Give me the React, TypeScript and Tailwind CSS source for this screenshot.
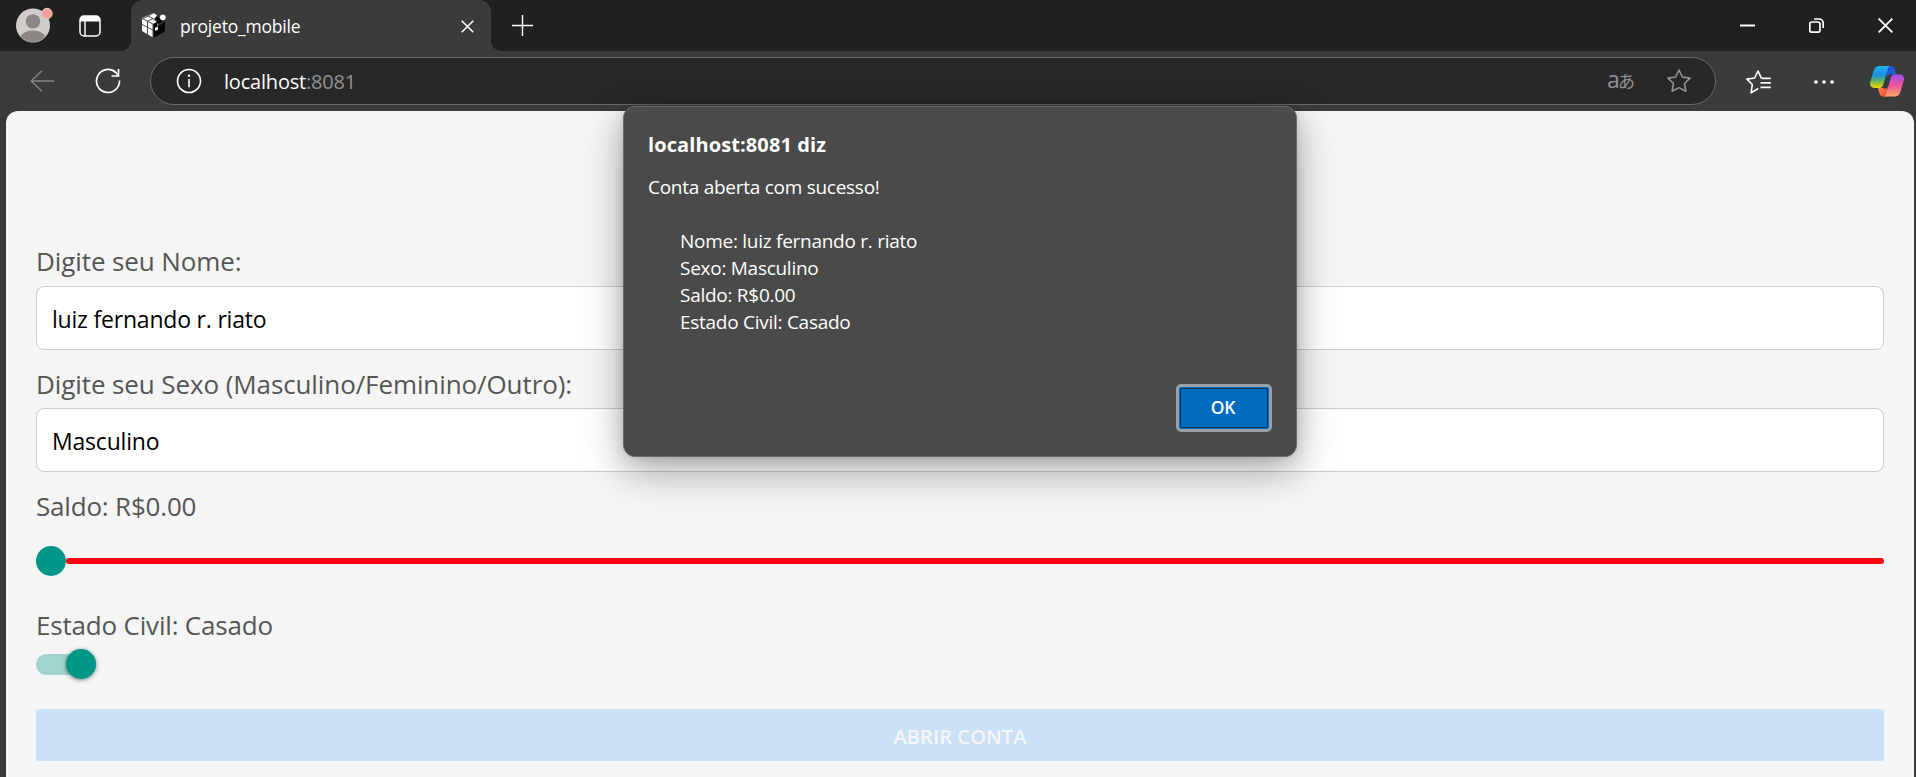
import React from "react";

function TabStrip() {
  return (
    <div className="flex h-[51px] bg-[#3b3b3b]">
      <div className="flex w-[131px] items-center rounded-br-[10px] bg-[#202020] pl-[16px]">
        <svg width="38" height="36" viewBox="0 0 38 36" className="-mt-px">
          <defs>
            <clipPath id="avatar">
              <circle cx="17" cy="18.5" r="16.5" />
            </clipPath>
          </defs>
          <circle cx="17" cy="18.5" r="17" fill="#d0cdc9" />
          <g clipPath="url(#avatar)" fill="#8a8785">
            <circle cx="17" cy="14.4" r="7.2" />
            <ellipse cx="17" cy="31.5" rx="12.5" ry="8" />
          </g>
          <circle cx="31" cy="6.5" r="5.2" fill="#fb9d98" stroke="#d8d0cd" strokeWidth="1" />
        </svg>
        <svg width="22" height="22" viewBox="0 0 22 22" fill="none" className="ml-[25px]">
          <rect x="1" y="1" width="20" height="20" rx="4" stroke="#fff" strokeWidth="1.5" />
          <path d="M1 6.5V5a4 4 0 0 1 4-4h12a4 4 0 0 1 4 4v1.5z" fill="#fff" />
          <path d="M6 6v15" stroke="#fff" strokeWidth="1.4" />
        </svg>
      </div>
      <div className="w-[360px] bg-[#202020]">
        <div className="flex h-full items-center rounded-t-[12px] bg-[#3b3b3b] pl-[11px]">
          <svg width="24" height="25" viewBox="0 0 24 25">
            <path d="M0 5 11 0l4 2-3 4.500L16 9v5l-4 9.500-1 1L0 18z" fill="#fff" />
            <path d="M11 11l4.500-2.500V13l4.500-2 3-3.500v11L11 25z" fill="#050505" />
            <path d="m15 3.500 4 2.500 1 3-4 2-2-3-2-1z" fill="#050505" />
            <path d="M0 5.500 11 11v14M5.500 2.700 15 7.500M5.500 8v14M11 .5 1 5.500M0 11.500l11 5.500M11 5.500 5.500 8.200" stroke="#4a4a4a" strokeWidth="1" fill="none" />
            <circle cx="20.800" cy="4.300" r="2.900" fill="#fff" />
            <path d="m13 15 3-1.500v3L13 18z" fill="#fff" />
          </svg>
          <span className="ml-[14px] w-[281px] text-[17.5px] leading-[26px] tracking-[-0.2px] text-white">projeto_mobile</span>
          <svg width="13" height="13" viewBox="0 0 13 13" className="mt-px shrink-0">
            <path d="m.7.7 11.6 11.6M12.3.7.7 12.3" stroke="#fff" strokeWidth="1.5" />
          </svg>
        </div>
      </div>
      <div className="flex flex-1 items-center rounded-bl-[10px] bg-[#202020] pl-[21px] pr-[23px]">
        <svg width="21" height="21" viewBox="0 0 21 21" className="-mt-px">
          <path d="M10.5 0v21M0 10.5h21" stroke="#fff" strokeWidth="1.4" />
        </svg>
        <div className="ml-auto flex items-center">
          <svg width="15" height="15" viewBox="0 0 15 15" className="-mt-px mr-[54px]">
            <path d="M0 7.5h15" stroke="#fff" strokeWidth="2" />
          </svg>
          <svg width="15" height="15" viewBox="0 0 15 15" fill="none" className="mr-[54px]">
            <rect x=".8" y="4" width="10.2" height="10.2" rx="2" stroke="#fff" strokeWidth="1.7" />
            <path d="M5 1h5a4.2 4.2 0 0 1 4.2 4.2V10" stroke="#fff" strokeWidth="1.7" />
          </svg>
          <svg width="15" height="15" viewBox="0 0 15 15">
            <path d="m.6.6 13.8 13.8M14.4.6.6 14.4" stroke="#fff" strokeWidth="1.8" />
          </svg>
        </div>
      </div>
    </div>
  );
}

function CopilotIcon() {
  return (
    <svg width="34" height="31" viewBox="0 0 34 31">
      <defs>
        <linearGradient id="cpA" x1="0" y1="0" x2="0" y2="1">
          <stop offset="0" stopColor="#20b5e8" />
          <stop offset=".4" stopColor="#168ee5" />
          <stop offset=".68" stopColor="#63b75c" />
          <stop offset="1" stopColor="#f5d400" />
        </linearGradient>
        <linearGradient id="cpB" x1="0" y1="0" x2="0" y2="1">
          <stop offset="0" stopColor="#a64df0" />
          <stop offset=".5" stopColor="#ed5597" />
          <stop offset="1" stopColor="#ffa766" />
        </linearGradient>
        <linearGradient id="cpC" x1="0" y1="0" x2="1" y2="1">
          <stop offset="0" stopColor="#1d4cd0" />
          <stop offset="1" stopColor="#1b70eb" />
        </linearGradient>
        <linearGradient id="cpD" x1="0" y1="0" x2="1" y2="1">
          <stop offset="0" stopColor="#ff9a3c" />
          <stop offset="1" stopColor="#ef3c3c" />
        </linearGradient>
      </defs>
      <path d="M16 0h5c2.200 0 3 1.500 3.600 3.500L26 8.500h-4.500c-2.500 0-4 1.200-4.600 3.500z" fill="url(#cpC)" />
      <path d="M18 30.500h-5c-2.200 0-3-1.500-3.600-3.500L8 22h4.500c2.500 0 4-1.200 4.600-3.500z" fill="url(#cpD)" />
      <path d="M9.500 0H21c-2 0-2.800 1.500-3.500 4l-4 14c-.7 2.600-2 4-4.500 4H4.500C1 22-.6 19.500.2 16L3.500 5C4.500 1.700 6.500 0 9.500 0z" fill="url(#cpA)" />
      <path d="M24.500 30.500H13c2 0 2.800-1.500 3.500-4l4-14c.7-2.600 2-4 4.500-4h4.500c3.500 0 5.100 2.500 4.300 6l-3.300 11c-1 3.300-3 5-6 5z" fill="url(#cpB)" />
      <path d="M17.200 10.500c.5-1.300 1.600-2 3-2H22c-.8.800-1.300 2.200-1.600 3.500l-2.900 9.500c-.3.700-.9 1-1.600 1h-2.700c.5-1 .9-2 1.200-3z" fill="#3b3b3b" />
    </svg>
  );
}

function Toolbar() {
  return (
    <div className="flex h-[60px] items-center bg-[#3b3b3b] pl-[30px]">
      <svg width="24" height="22" viewBox="0 0 24 22" fill="none" stroke="#848484" strokeWidth="1.5" className="-mt-px">
        <path d="M12 .8 1 11l11 10.200M1 11h23" />
      </svg>
      <svg width="26" height="26" viewBox="0 0 26 26" fill="none" stroke="#fff" strokeWidth="1.7" className="ml-[41px]">
        <path d="M24.500 12.500A11.500 11.500 0 1 1 20.800 4.500L23 7" />
        <path d="M23.500 1v7H16.500" />
      </svg>
      <div className="ml-[29px] flex h-[48px] w-[1566px] items-center rounded-full border-[1.5px] border-[#686868] bg-[#282828] pl-[25px] pr-[24px]">
        <svg width="26" height="26" viewBox="0 0 26 26" fill="none" stroke="#fff" strokeWidth="1.600">
          <circle cx="13" cy="13" r="11.500" />
          <path d="M13 11v8.200" />
          <circle cx="13" cy="7.800" r="1.200" fill="#fff" stroke="none" />
        </svg>
        <span className="ml-[22px] pt-[2px] text-[20px] leading-[28px] tracking-[-0.2px] text-white">
          localhost<span className="text-[#929292]">:8081</span>
        </span>
        <span className="ml-auto mr-px flex w-[27px] items-baseline pb-[2px] text-[#929292]">
          <span className="w-[11px] text-[23px] leading-[28px]">a</span>
          <span className="font-['Noto_Sans_CJK_JP',sans-serif] text-[17px] leading-[28px]">あ</span>
        </span>
        <svg width="24" height="24" viewBox="0 0 24 24" fill="none" stroke="#929292" strokeWidth="1.600" strokeLinejoin="round" className="ml-[32px]">
          <path d="m12 1 3.400 7 7.700 1.100-5.600 5.400 1.400 7.700L12 18.600l-6.900 3.600 1.400-7.700L.9 9.100 8.600 8z" />
        </svg>
      </div>
      <svg width="25" height="24" viewBox="0 0 25 24" fill="none" stroke="#fff" strokeWidth="1.600" strokeLinejoin="round" className="ml-[30px] mt-[2px]">
        <path d="M15.600 8.600 12 1 8.600 8 .9 9.100l5.400 5.400-1.200 8.300 7.200-4.300M16 8.400h8.800M14.500 12.900h10.300M14.500 17.400h10.300" />
      </svg>
      <svg width="20" height="6" viewBox="0 0 20 6" fill="#fff" className="ml-[43px] mt-px">
        <circle cx="2" cy="3" r="1.800" />
        <circle cx="10" cy="3" r="1.800" />
        <circle cx="18" cy="3" r="1.800" />
      </svg>
      <div className="ml-[36px]">
        <CopilotIcon />
      </div>
    </div>
  );
}

function Field({ label, value, className }: { label: string; value: string; className: string }) {
  return (
    <div className={className}>
      <div className="text-[26px] leading-9 tracking-[-0.1px] text-[#555]">{label}</div>
      <div className="flex h-16 items-center rounded-[8px] border border-[#ccc] bg-white px-[15px] pt-px text-[23px] leading-8 tracking-[-0.2px] text-black">
        <span>{value}</span>
      </div>
    </div>
  );
}

function AlertDialog() {
  return (
    <div className="absolute left-[623px] top-[106px] flex h-[351px] w-[674px] flex-col rounded-[12px] border border-[#696969] bg-[#4a4a4a] px-[24px] text-[19px] leading-[27px] tracking-[-0.27px] text-white shadow-[0_14px_40px_rgba(0,0,0,0.34),0_0_12px_rgba(0,0,0,0.15)]">
      <h1 className="mt-[24px] text-[20px] font-bold leading-[28px] tracking-[0.1px]">localhost:8081 diz</h1>
      <p className="mt-[15px]">Conta aberta com sucesso!</p>
      <div className="mt-[27px] pl-[32px]">
        <p>Nome: luiz fernando r. riato</p>
        <p>Sexo: Masculino</p>
        <p>Saldo: R$0.00</p>
        <p>Estado Civil: Casado</p>
      </div>
      <button className="ml-auto mt-[48px] flex h-[48px] w-[96px] items-center justify-center rounded-[5px] border-[3px] border-[#9aa0a9] bg-[#006cbf]">
        <span className="flex h-[40px] w-[88px] items-center justify-center rounded-[2px] border border-[#08345c] pb-[2px] pr-[2px] text-[17.500px] font-semibold">OK</span>
      </button>
    </div>
  );
}

export default function App() {
  return (
    <div className="relative flex h-[777px] w-[1916px] flex-col overflow-hidden bg-[#3b3b3b] font-['Open_Sans',sans-serif]">
      <TabStrip />
      <Toolbar />
      <main className="ml-[6px] mr-[2px] flex-1 rounded-t-[12px] bg-[#f5f5f5] px-[30px] pt-[132px]">
        <Field label="Digite seu Nome:" value="luiz fernando r. riato" className="flex flex-col gap-[7px]" />
        <Field
          label="Digite seu Sexo (Masculino/Feminino/Outro):"
          value="Masculino"
          className="mt-[16px] flex flex-col gap-[6px]"
        />
        <div className="mt-[16px] text-[26px] leading-9 tracking-[-0.19px] text-[#555]">Saldo: R$0.00</div>
        <div className="mt-[22px] flex items-center">
          <div className="size-[30px] rounded-full bg-[#009688]" />
          <div className="h-[6px] flex-1 rounded-full bg-[#ff0011]" />
        </div>
        <div className="mt-[31px] text-[26px] leading-9 tracking-[-0.19px] text-[#555]">Estado Civil: Casado</div>
        <div className="mt-[6px] flex h-[30px] w-[60px] items-center">
          <div className="flex h-[21px] w-full items-center justify-end rounded-full bg-[#a3d3cf]">
            <div className="size-[30px] shrink-0 rounded-full bg-[#009688] shadow-[0_1px_4px_rgba(0,0,0,0.5)]" />
          </div>
        </div>
        <div className="mt-[30px] flex h-[52px] items-center justify-center rounded-[3px] bg-[#cbe1f8] pt-[3px] text-[20px] font-semibold tracking-[0.1px] text-[#f7f7f7]">
          ABRIR CONTA
        </div>
      </main>
      <AlertDialog />
    </div>
  );
}
